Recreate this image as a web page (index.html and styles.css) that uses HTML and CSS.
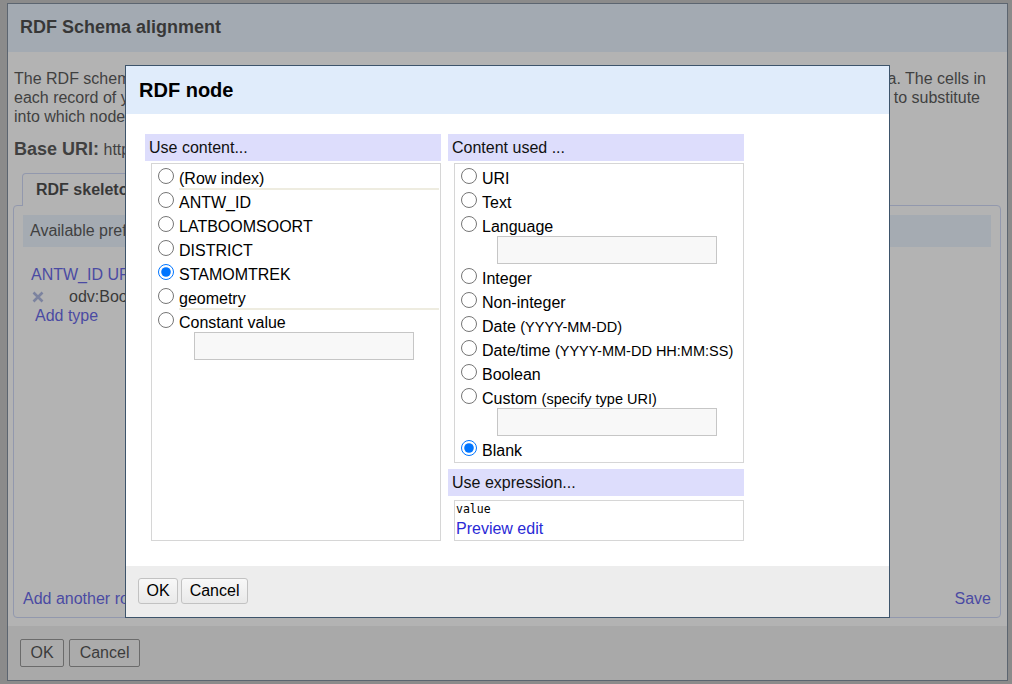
FILE: index.html
```html
<!DOCTYPE html>
<html>
<head>
<meta charset="utf-8">
<title>RDF node</title>
<link rel="stylesheet" href="styles.css">
</head>
<body>
<div class="page"></div>
<div class="overlay"></div>

<div class="dialog dlg-schema">
  <div class="schema-header">RDF Schema alignment</div>
  <div class="schema-body">
    <div class="intro">
      <div class="intro-line"><span>The RDF schema alignment skeleton below specifies how</span><span class="tail tail-1">generated from your grid-shaped data. The cells in</span></div>
      <div class="intro-line"><span>each record of your data will get placed into nodes</span><span class="tail tail-2">by specifying which column to substitute</span></div>
      <div class="intro-line"><span>into which node.</span></div>
    </div>
    <div class="base-uri"><b>Base URI:</b> http://localhost:3333/</div>
    <div class="tabs">
      <div class="tab-list"><div class="tab">RDF skeleton</div><div class="tab tab-off">RDF preview</div></div>
      <div class="tab-panel">
        <div class="prefix-bar">Available prefixes: rdf rdfs owl xsd odv</div>
        <div class="node">
          <a class="link">ANTW_ID URI</a>
          <div class="type-row">
            <svg class="x-icon" viewBox="0 0 12 12" width="12" height="12"><path d="M1.5 1.5 L10.5 10.5 M10.5 1.5 L1.5 10.5"/></svg>
            <span>odv:Boom</span>
          </div>
          <a class="link add-type">Add type</a>
        </div>
        <div class="panel-footer"><a class="link">Add another root node</a><a class="link">Save</a></div>
      </div>
    </div>
  </div>
  <div class="schema-footer">
    <button class="btn-dim">OK</button>
    <button class="btn-dim">Cancel</button>
  </div>
</div>

<div class="overlay"></div>

<div class="dialog dlg-node">
  <div class="node-header">RDF node</div>
  <div class="node-body">
    <div class="col">
      <div class="col-head">Use content...</div>
      <div class="opt-box opt-box-fill">
        <label class="opt"><input type="radio" name="c"><span class="opt-label sep">(Row index)</span></label>
        <label class="opt"><input type="radio" name="c"><span class="opt-label">ANTW_ID</span></label>
        <label class="opt"><input type="radio" name="c"><span class="opt-label">LATBOOMSOORT</span></label>
        <label class="opt"><input type="radio" name="c"><span class="opt-label">DISTRICT</span></label>
        <label class="opt"><input type="radio" name="c" checked><span class="opt-label">STAMOMTREK</span></label>
        <label class="opt"><input type="radio" name="c"><span class="opt-label sep">geometry</span></label>
        <label class="opt"><input type="radio" name="c"><span class="opt-label">Constant value</span></label>
        <input type="text" class="text-input">
      </div>
    </div>
    <div class="col">
      <div class="col-head">Content used ...</div>
      <div class="opt-box">
        <label class="opt"><input type="radio" name="t"><span class="opt-label">URI</span></label>
        <label class="opt"><input type="radio" name="t"><span class="opt-label">Text</span></label>
        <label class="opt"><input type="radio" name="t"><span class="opt-label">Language</span></label>
        <input type="text" class="text-input">
        <label class="opt"><input type="radio" name="t"><span class="opt-label">Integer</span></label>
        <label class="opt"><input type="radio" name="t"><span class="opt-label">Non-integer</span></label>
        <label class="opt"><input type="radio" name="t"><span class="opt-label">Date <small>(YYYY-MM-DD)</small></span></label>
        <label class="opt"><input type="radio" name="t"><span class="opt-label">Date/time <small>(YYYY-MM-DD HH:MM:SS)</small></span></label>
        <label class="opt"><input type="radio" name="t"><span class="opt-label">Boolean</span></label>
        <label class="opt"><input type="radio" name="t"><span class="opt-label">Custom <small>(specify type URI)</small></span></label>
        <input type="text" class="text-input">
        <label class="opt"><input type="radio" name="t" checked><span class="opt-label">Blank</span></label>
      </div>
      <div class="col-head col-head-gap">Use expression...</div>
      <div class="expr-box">
        <div class="expr-code">value</div>
        <a class="link expr-link">Preview edit</a>
      </div>
    </div>
  </div>
  <div class="node-footer">
    <button class="btn">OK</button>
    <button class="btn">Cancel</button>
  </div>
</div>
</body>
</html>
```
FILE: styles.css
```css
html, body {
  margin: 0;
  padding: 0;
  width: 1012px;
  height: 684px;
  overflow: hidden;
}
body {
  position: relative;
  font-family: "Liberation Sans", Arial, sans-serif;
  font-size: 16px;
  color: #111;
  background: #ffffff;
}
.page {
  width: 1012px;
  height: 684px;
}
.overlay {
  position: absolute;
  left: 0;
  top: 0;
  width: 1012px;
  height: 684px;
  background: rgba(98, 98, 98, 0.484);
}
.dialog {
  position: absolute;
  box-sizing: border-box;
  display: flex;
  flex-direction: column;
  overflow: hidden;
}
.link {
  color: #3535e0;
  cursor: pointer;
}

/* ---------- Schema alignment dialog (background) ---------- */
.dlg-schema {
  left: 7px;
  top: 3px;
  width: 1001px;
  height: 678px;
  border: 1px solid #57697e;
  background: #ffffff;
}
.schema-header {
  height: 48px;
  flex-shrink: 0;
  background: #e1eefe;
  font-weight: bold;
  font-size: 18px;
  line-height: 47px;
  padding-left: 12px;
  color: #111;
}
.schema-body {
  flex: 1;
  display: flex;
  flex-direction: column;
  padding: 17px 6px 8px 5px;
  min-height: 0;
}
.intro {
  padding-left: 1px;
  line-height: 19px;
  color: #222;
}
.intro-line {
  display: flex;
  justify-content: space-between;
  white-space: nowrap;
}
.tail-1 { margin-right: 15px; }
.tail-2 { margin-right: 21px; }
.base-uri {
  margin-top: 12px;
  padding-left: 1px;
  line-height: 22px;
  color: #222;
}
.base-uri b {
  font-size: 18px;
}
.tabs {
  margin-top: 12px;
  flex: 1;
  display: flex;
  flex-direction: column;
}
.tab-list {
  display: flex;
  padding-left: 9px;
  gap: 4px;
}
.tab {
  border: 1px solid #c0ccf4;
  border-bottom: none;
  border-radius: 4px 4px 0 0;
  background: #ffffff;
  padding: 0 13px;
  line-height: 32px;
  font-weight: bold;
  margin-bottom: -1px;
  position: relative;
}
.tab-off {
  background: #f4f6fb;
}
.tab-panel {
  flex: 1;
  border: 1px solid #c0ccf4;
  border-radius: 4px;
  display: flex;
  flex-direction: column;
  padding: 9px 9px 8px 9px;
}
.prefix-bar {
  height: 32px;
  line-height: 32px;
  background: #e5f0fe;
  padding-left: 7px;
  color: #222;
}
.node {
  margin-top: 17px;
  padding-left: 8px;
  display: flex;
  flex-direction: column;
  align-items: flex-start;
}
.node .link {
  line-height: 22px;
}
.type-row {
  display: flex;
  align-items: center;
  height: 22px;
  padding-left: 1px;
}
.x-icon {
  margin-right: 25px;
}
.x-icon path {
  stroke: #95a3d8;
  stroke-width: 2.6;
  fill: none;
}
.node .add-type {
  line-height: 16px;
  padding-left: 4px;
}
.panel-footer {
  margin-top: auto;
  display: flex;
  justify-content: space-between;
  line-height: 20px;
}
.schema-footer {
  height: 54px;
  flex-shrink: 0;
  box-sizing: border-box;
  background: #ececec;
  padding: 13px 12px 0;
  display: flex;
  align-items: flex-start;
  gap: 5px;
}
.btn-dim {
  height: 28px;
  padding: 0 9.5px;
  font-family: "Liberation Sans", Arial, sans-serif;
  font-size: 16px;
  color: #161616;
  background: #efefef;
  border: 1px solid #747474;
  border-radius: 2px;
}

/* ---------- RDF node dialog (front) ---------- */
.dlg-node {
  left: 125px;
  top: 65px;
  width: 765px;
  height: 553px;
  border: 1px solid #3d546b;
  background: #ffffff;
}
.node-header {
  height: 48px;
  flex-shrink: 0;
  background: #e0ecfb;
  font-weight: bold;
  font-size: 20px;
  line-height: 48px;
  padding-left: 13px;
  color: #000;
}
.node-body {
  flex: 1;
  display: grid;
  grid-template-columns: 296px 296px;
  column-gap: 7px;
  align-content: start;
  padding: 20px 0 0 19px;
}
.col {
  display: flex;
  flex-direction: column;
}
.col-head {
  height: 27px;
  line-height: 27px;
  background: #ddddfc;
  padding-left: 4px;
  color: #111;
}
.col-head-gap {
  margin-top: 6px;
}
.opt-box {
  margin: 2px 0 0 6px;
  border: 1px solid #d6d6d6;
  padding-top: 2px;
  display: flex;
  flex-direction: column;
}
.opt-box-fill {
  flex: 1;
}
.opt {
  display: flex;
  height: 24px;
  align-items: stretch;
}
.opt input[type="radio"] {
  width: 16px;
  height: 16px;
  margin: 2px 5px 0 6px;
  flex-shrink: 0;
}
.opt-label {
  line-height: 26px;
  height: 24px;
  white-space: nowrap;
  color: #000;
}
.opt-label small {
  font-size: 14.5px;
}
.opt-label.sep {
  flex: 1;
  box-sizing: border-box;
  border-bottom: 2px solid #eeece0;
  margin-right: 1px;
}
.text-input {
  display: block;
  box-sizing: border-box;
  width: 220px;
  height: 28px;
  margin: -2px 0 2px 42px;
  border: 1px solid #c6c6c6;
  background: #f8f8f8;
  padding: 0 4px;
  font-family: "Liberation Sans", Arial, sans-serif;
  font-size: 16px;
}
.expr-box {
  margin: 4px 0 0 6px;
  border: 1px solid #d6d6d6;
  padding: 0 1px;
  display: flex;
  flex-direction: column;
  align-items: flex-start;
}
.expr-code {
  font-family: "DejaVu Sans Mono", "Liberation Mono", monospace;
  font-size: 11.5px;
  line-height: 17px;
  color: #000;
}
.expr-link {
  line-height: 22px;
  color: #2a2ad6;
}
.node-footer {
  height: 51px;
  flex-shrink: 0;
  box-sizing: border-box;
  background: #ededed;
  padding: 12px 12px 0;
  display: flex;
  align-items: flex-start;
  gap: 3px;
}
.btn {
  height: 26px;
  padding: 0 7.5px;
  font-family: "Liberation Sans", Arial, sans-serif;
  font-size: 16px;
  color: #000;
  background: linear-gradient(#f8f8f8, #e9e9e9);
  border: 1px solid #c2c2c2;
  border-radius: 3px;
}
```
